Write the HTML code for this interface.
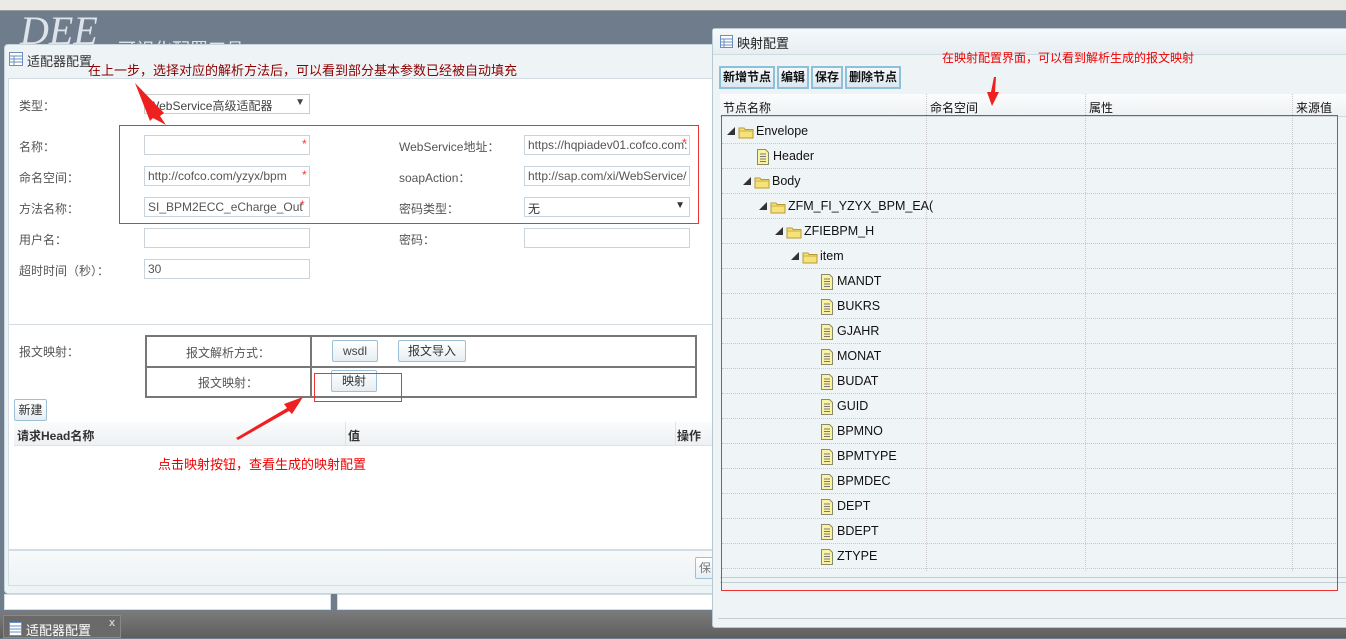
<!DOCTYPE html>
<html><head><meta charset="utf-8"><style>
*{box-sizing:border-box;margin:0;padding:0}
body{width:1346px;height:638px;overflow:hidden;position:relative;background:#6f7c8c;font-family:"Liberation Sans","Noto Sans CJK SC",sans-serif;font-size:12px;color:#333}
.a{position:absolute}
.inp{position:absolute;height:20px;border:1px solid #c9d3db;background:#fff;font-size:12px;color:#555;padding:2px 3px;white-space:nowrap;overflow:hidden}
.star{position:absolute;color:#f33;font-size:12px}
.lab{position:absolute;color:#555;font-size:12px}
.btn{position:absolute;border:1px solid #9cc0d6;border-radius:2px;background:linear-gradient(#fff,#e6eef3);font-size:12px;color:#333;text-align:center;line-height:20px}
.tb{position:absolute;top:66px;height:23px;border:2px solid #8fc0da;background:linear-gradient(#f4f8fb,#dbe7ef);font-weight:bold;font-size:12px;color:#111;line-height:19px;text-align:center}
.row{position:absolute;left:722px;width:616px;height:25px;border-bottom:1px dotted #c8c8c8}
.tx{position:absolute;font-size:12px;color:#111}
.vl{position:absolute;top:94px;height:477px;border-left:1px dotted #c8c8c8}
.red{position:absolute;color:#e00;font-size:12px}
</style></head><body>
<div class="a" style="left:0;top:0;width:1346px;height:11px;background:#eceae6;border-bottom:1px solid #9a9a9a"></div>
<div class="a" style="left:20px;top:13px;font-size:40px;font-style:italic;color:#dde3ea;font-family:'Liberation Serif',serif;line-height:36px">DEE</div>
<div class="a" style="left:118px;top:36px;font-size:18px;color:#dde3ea">可视化配置工具</div>

<!-- left dialog -->
<div class="a" style="left:4px;top:44px;width:714px;height:550px;background:#eef3f6;border:1px solid #c6d4dc;border-radius:4px"></div>
<svg class="a" style="left:9px;top:52px" width="14" height="14"><rect x="0.5" y="0.5" width="13" height="13" fill="#fff" stroke="#6b8fc0"/><path d="M1 4h12M1 7h12M1 10h12M5 4v9" stroke="#6b8fc0"/></svg>
<div class="a" style="left:27px;top:51px;font-size:13px;color:#333">适配器配置</div>
<div class="a" style="left:8px;top:78px;width:706px;height:472px;background:#fff;border:1px solid #d3dde3"></div>
<div class="a" style="left:8px;top:324px;width:706px;border-top:1px solid #d3dde3"></div>
<div class="a" style="left:8px;top:550px;width:706px;height:36px;background:linear-gradient(#f7f9fa,#eef3f6);border:1px solid #d3dde3"></div>
<div class="btn" style="left:695px;top:557px;width:20px;height:22px;color:#777">保</div>
<div class="a" style="left:4px;top:594px;width:327px;height:16px;background:#fff;border:1px solid #d3dde3"></div>
<div class="a" style="left:337px;top:594px;width:378px;height:16px;background:#fff;border:1px solid #d3dde3"></div>

<div class="lab" style="left:19px;top:97px">类型：</div>
<div class="inp" style="left:144px;top:94px;width:166px;height:20px;border-color:#ccc;color:#444">WebService高级适配器<span style="position:absolute;right:4px;top:2px;font-size:10px">▼</span></div>
<div class="lab" style="left:19px;top:138px">名称：</div>
<div class="inp" style="left:144px;top:135px;width:166px"></div><div class="star" style="left:302px;top:137px">*</div>
<div class="lab" style="left:19px;top:169px">命名空间：</div>
<div class="inp" style="left:144px;top:166px;width:166px">http://cofco.com/yzyx/bpm</div><div class="star" style="left:302px;top:168px">*</div>
<div class="lab" style="left:19px;top:200px">方法名称：</div>
<div class="inp" style="left:144px;top:197px;width:166px">SI_BPM2ECC_eCharge_Out</div><div class="star" style="left:300px;top:198px">*</div>
<div class="lab" style="left:19px;top:231px">用户名：</div>
<div class="inp" style="left:144px;top:228px;width:166px"></div>
<div class="lab" style="left:19px;top:262px">超时时间（秒）：</div>
<div class="inp" style="left:144px;top:259px;width:166px">30</div>
<div class="lab" style="left:399px;top:138px">WebService地址：</div>
<div class="inp" style="left:524px;top:135px;width:166px">https://hqpiadev01.cofco.com:</div><div class="star" style="left:682px;top:136px">*</div>
<div class="lab" style="left:399px;top:169px">soapAction：</div>
<div class="inp" style="left:524px;top:166px;width:166px">http://sap.com/xi/WebService/</div>
<div class="lab" style="left:399px;top:200px">密码类型：</div>
<div class="inp" style="left:524px;top:197px;width:166px;color:#333">无<span style="position:absolute;right:4px;top:2px;font-size:10px">▼</span></div>
<div class="lab" style="left:399px;top:231px">密码：</div>
<div class="inp" style="left:524px;top:228px;width:166px"></div>

<div class="lab" style="left:19px;top:343px">报文映射：</div>
<div class="a" style="left:145px;top:335px;width:552px;height:63px;border:2px solid #777"></div>
<div class="a" style="left:145px;top:366px;width:552px;border-top:2px solid #777"></div>
<div class="a" style="left:310px;top:335px;height:63px;border-left:2px solid #777"></div>
<div class="lab" style="left:186px;top:344px">报文解析方式：</div>
<div class="lab" style="left:198px;top:374px">报文映射：</div>
<div class="btn" style="left:332px;top:340px;width:46px;height:22px;color:#444">wsdl</div>
<div class="btn" style="left:398px;top:340px;width:68px;height:22px">报文导入</div>
<div class="btn" style="left:331px;top:370px;width:46px;height:22px">映射</div>
<div class="btn" style="left:14px;top:399px;width:33px;height:22px">新建</div>
<div class="a" style="left:14px;top:422px;width:698px;height:24px;background:linear-gradient(#fafbfc,#eef1f3);border-bottom:1px solid #dde3e7"></div>
<div class="a" style="left:345px;top:422px;height:24px;border-left:1px solid #dde3e7"></div>
<div class="a" style="left:675px;top:422px;height:24px;border-left:1px solid #dde3e7"></div>
<div class="tx" style="left:17px;top:427px;font-weight:bold;color:#333">请求Head名称</div>
<div class="tx" style="left:348px;top:427px;font-weight:bold;color:#333">值</div>
<div class="tx" style="left:677px;top:427px;font-weight:bold;color:#333">操作</div>

<!-- taskbar -->
<div class="a" style="left:0;top:612px;width:1346px;height:26px;background:linear-gradient(#7a7a7a,#5e5e5e)"></div>
<div class="a" style="left:3px;top:615px;width:118px;height:23px;background:#6a6a6a;border:1px solid #888"></div>
<svg class="a" style="left:9px;top:622px" width="13" height="14"><rect x="0.5" y="0.5" width="12" height="13" fill="#fff" stroke="#6b8fc0"/><path d="M1 4h11M1 7h11M1 10h11" stroke="#6b8fc0"/></svg>
<div class="a" style="left:26px;top:620px;color:#fff;font-size:13px">适配器配置</div>
<div class="a" style="left:109px;top:617px;color:#ccc;font-size:11px;font-weight:bold">x</div>

<!-- right dialog -->
<div class="a" style="left:712px;top:28px;width:640px;height:600px;background:#eef3f6;border:1px solid #b9c9d2;border-radius:3px"></div>
<div class="a" style="left:713px;top:29px;width:640px;height:26px;background:linear-gradient(#f6f9fa,#e7eef2);border-bottom:1px solid #cfdbe2"></div>
<svg class="a" style="left:720px;top:35px" width="13" height="13"><rect x="0.5" y="0.5" width="12" height="12" fill="#fff" stroke="#6b8fc0"/><path d="M1 4h11M1 7h11M1 10h11M4 4v8" stroke="#6b8fc0"/></svg>
<div class="a" style="left:737px;top:33px;font-size:13px;color:#222">映射配置</div>
<div class="tb" style="left:719px;width:56px">新增节点</div>
<div class="tb" style="left:777px;width:32px">编辑</div>
<div class="tb" style="left:811px;width:32px">保存</div>
<div class="tb" style="left:845px;width:56px">删除节点</div>
<div class="a" style="left:720px;top:94px;width:626px;height:23px;background:linear-gradient(#fbfcfd,#eef2f4);border-bottom:1px solid #d2d8dc"></div>
<div class="a" style="left:720px;top:117px;width:626px;height:455px;background:#eff4f7"></div>
<div class="vl" style="left:926px"></div><div class="vl" style="left:1085px"></div><div class="vl" style="left:1292px"></div>
<div class="tx" style="left:723px;top:99px">节点名称</div>
<div class="tx" style="left:930px;top:99px">命名空间</div>
<div class="tx" style="left:1089px;top:99px">属性</div>
<div class="tx" style="left:1296px;top:99px">来源值</div>
<div class="a" style="left:720px;top:577px;width:626px;border-top:1px solid #c3ced4"></div>
<div class="a" style="left:720px;top:582px;width:626px;border-top:1px solid #c3ced4"></div>
<div class="a" style="left:718px;top:618px;width:628px;border-top:1px solid #c3ced4"></div>

<svg width="0" height="0" style="position:absolute"><defs>
<symbol id="fo" viewBox="0 0 16 14"><path d="M1 3h5l1 1.5h8v8.5H1z" fill="#f7e27a" stroke="#b79b32"/><path d="M1 6h14" stroke="#c9ae45"/></symbol>
<symbol id="fi" viewBox="0 0 12 16"><path d="M0.5 0.5h8l3 3v12h-11z" fill="#fbf3a3" stroke="#8a8a6a"/><path d="M3 5h6M3 7.5h6M3 10h6M3 12.5h6" stroke="#777"/></symbol>
</defs></svg>
<div id="tree"></div>
<script>
var rows=[["Envelope",727,1],["Header",757,0],["Body",743,1],["ZFM_FI_YZYX_BPM_EA(",759,1],["ZFIEBPM_H",775,1],["item",791,1],["MANDT",821,0],["BUKRS",821,0],["GJAHR",821,0],["MONAT",821,0],["BUDAT",821,0],["GUID",821,0],["BPMNO",821,0],["BPMTYPE",821,0],["BPMDEC",821,0],["DEPT",821,0],["BDEPT",821,0],["ZTYPE",821,0]];
var h="";
rows.forEach(function(r,i){var y=119+i*25;var x=r[1];
h+='<div class="row" style="top:'+y+'px"></div>';
if(r[2]){h+='<div class="tx" style="left:'+x+'px;top:'+(y+7)+'px;font-size:8px;color:#333">◢</div><svg style="position:absolute;left:'+(x+11)+'px;top:'+(y+6)+'px" width="16" height="14"><use href="#fo"/></svg><div class="tx" style="left:'+(x+29)+'px;top:'+(y+5)+'px;font-size:12.5px">'+r[0]+'</div>';}
else{h+='<svg style="position:absolute;left:'+x+'px;top:'+(y+5)+'px" width="12" height="16"><use href="#fi"/></svg><div class="tx" style="left:'+(x+16)+'px;top:'+(y+5)+'px;font-size:12.5px">'+r[0]+'</div>';}
});
document.getElementById("tree").innerHTML=h;
</script>

<!-- annotations -->
<div class="a" style="left:119px;top:125px;width:580px;height:99px;border:1px solid #e33"></div>
<div class="a" style="left:314px;top:373px;width:88px;height:29px;border:1px solid #e33"></div>
<div class="a" style="left:721px;top:115px;width:617px;height:476px;border:1px solid #e33"></div>
<div class="red" style="left:88px;top:60px;color:#8b0000;font-size:13px">在上一步，选择对应的解析方法后，可以看到部分基本参数已经被自动填充</div>
<div class="red" style="left:942px;top:49px">在映射配置界面，可以看到解析生成的报文映射</div>
<div class="red" style="left:158px;top:454px;font-size:13px">点击映射按钮，查看生成的映射配置</div>
<svg class="a" style="left:0;top:0" width="1346" height="638">
<path d="M135 83 L164 113 L160 116 L166 125 L153 118 L150 121Z" fill="#ee2020"/>
<path d="M236 438 L287 408 L284 404 L303 397 L292 414 L289 411 L238 440Z" fill="#ee2020"/>
<path d="M994 77 L996 77 L995 92 L999 92 L992 106 L987 92 L991 92Z" fill="#ee2020"/>
</svg>
</body></html>
